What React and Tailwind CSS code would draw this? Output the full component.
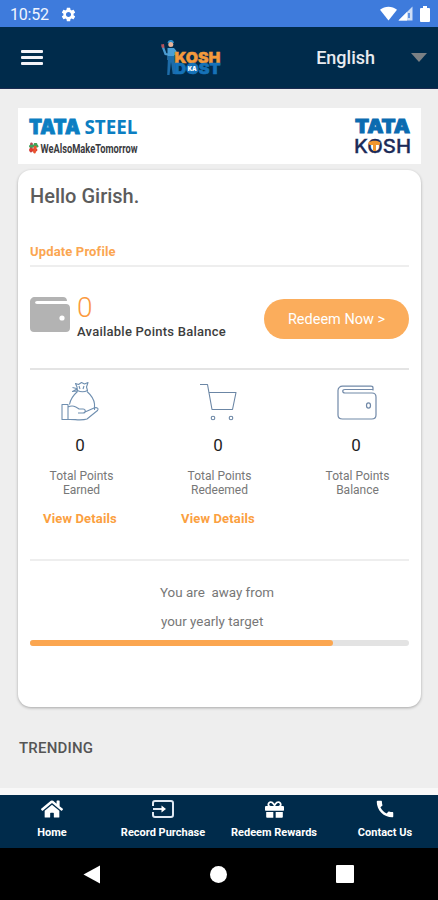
import React from "react";
import { FaHome, FaGift } from "react-icons/fa";
import { MdSettings, MdCall } from "react-icons/md";

const StatusBar = () => (
  <div className="h-[27px] shrink-0 bg-[#3e7bdc] flex items-center justify-between pl-[10px] pr-[8px] text-white">
    <div className="flex items-center gap-[11px] pt-[2px]">
      <span className="text-[16px] leading-5 tracking-[-0.2px] text-[#f0f5ff]">10:52</span>
      <MdSettings className="w-[17px] h-[17px]" />
    </div>
    <div className="flex items-center">
      <svg className="w-[17px] h-[15px]" viewBox="0 0 17 15" fill="currentColor">
        <path d="M0 3.800C5-.3 12-.3 17 3.800L8.500 14.500z" />
      </svg>
      <svg className="w-[15px] h-[15px] ml-[1px]" viewBox="0 0 15 15">
        <path d="M14.500.5v14H.5z" fill="#fff" fillOpacity="0.75" />
        <path d="M9 6v8.500H.5z" fill="#fff" />
        <path d="M11 7v5" stroke="#3e7bdc" strokeWidth="1.500" />
      </svg>
      <svg className="w-[10px] h-[16px] ml-[7px]" viewBox="0 0 10 16" fill="currentColor">
        <path d="M3 0h4v2H9a1 1 0 0 1 1 1v12a1 1 0 0 1-1 1H1a1 1 0 0 1-1-1V3a1 1 0 0 1 1-1h2z" />
      </svg>
    </div>
  </div>
);

const KoshLogo = () => (
  <svg className="w-[62px] h-[38px] overflow-visible" viewBox="0 0 62 38">
    {/* mascot */}
    <path d="M2.500 7l3 8 5 1" fill="none" stroke="#4a9bd0" strokeWidth="2.200" />
    <path d="M1 5.500l3-.5.5 3.500-2.500.5z" fill="#b5525a" />
    <path d="M8 2.500c1-2 5-2 5.500 0l.5 1.500H7.500z" fill="#2f8fc9" />
    <circle cx="10.800" cy="5.500" r="2.500" fill="#e8b49a" />
    <path d="M7.500 9h6.500l2.500 3v5l-2-1-.5 5H7.500z" fill="#4a9fd6" />
    <path d="M8 17h6.500l1.200 18h-3L11 23 9.500 36h-2.300z" fill="#1d6ca8" />
    <text x="14.500" y="23.700" fontFamily="Inter" fontWeight="900" fontSize="14.500" fill="#f39a3c" stroke="#f39a3c" strokeWidth="0.400" textLength="46" lengthAdjust="spacingAndGlyphs">KOSH</text>
    <text x="14.500" y="35" fontFamily="Inter" fontWeight="900" fontSize="14" fill="#1672b8" stroke="#1672b8" strokeWidth="0.600" textLength="46" lengthAdjust="spacingAndGlyphs">DOST</text>
    <rect x="27" y="26.800" width="10.500" height="6.400" rx="1" fill="#1672b8" />
    <text x="27.700" y="32.300" fontFamily="Inter" fontWeight="900" fontSize="6.500" fill="#fff" textLength="9" lengthAdjust="spacingAndGlyphs">KA</text>
  </svg>
);

const Header = () => (
  <header className="h-[62px] shrink-0 bg-[#002b4b] border-b border-[#1b2b50] flex items-center pl-[21px] pr-[11px]">
    <div className="flex flex-col gap-[3px] w-[22px]">
      <span className="h-[3px] rounded-[1px] bg-[#f3f3f8]" />
      <span className="h-[3px] rounded-[1px] bg-[#f3f3f8]" />
      <span className="h-[3px] rounded-[1px] bg-[#f3f3f8]" />
    </div>
    <div className="ml-[117px] pt-[1px]">
      <KoshLogo />
    </div>
    <span className="ml-auto text-[18px] leading-6 font-medium text-[#e8ebf0]">English</span>
    <svg className="ml-[36px] w-[16px] h-[9px]" viewBox="0 0 16 9">
      <path d="M0 0h16L8 9z" fill="#7b8084" />
    </svg>
  </header>
);

const Banner = () => (
  <div className="h-[56px] bg-white flex items-start justify-between pl-[10px] pr-[9px] pt-[10px]">
    <svg className="w-[112px] h-[40px] overflow-visible" viewBox="0 0 112 40">
      <text x="1" y="16" fontFamily="Inter" fontWeight="900" fontSize="20" fill="#0b7ec2" stroke="#0b7ec2" strokeWidth="0.900" textLength="51" lengthAdjust="spacingAndGlyphs">TATA</text>
      <text x="56.500" y="16" fontFamily="Open Sans" fontWeight="700" fontSize="20" fill="#0b7ec2" textLength="53" lengthAdjust="spacingAndGlyphs">STEEL</text>
      <g strokeWidth="2.800" strokeLinecap="round">
        <path d="M3.500 26l-.5 7" stroke="#b04a52" />
        <path d="M2.500 28.200h6.500" stroke="#3fa45b" />
        <path d="M2.500 32h5.500" stroke="#e03a2f" />
        <path d="M7.500 26.500l-1 7.500" stroke="#e9542f" />
        <path d="M7 26.500h1" stroke="#3fa45b" />
      </g>
      <text x="12.500" y="34.500" fontFamily="Roboto" fontWeight="700" fontSize="13" fill="#3a3a3e" textLength="97" lengthAdjust="spacingAndGlyphs">WeAlsoMakeTomorrow</text>
    </svg>
    <svg className="w-[58px] h-[38px] overflow-visible" viewBox="0 0 58 38">
      <text x="1" y="15" fontFamily="Inter" fontWeight="900" fontSize="18.500" fill="#0b6bb0" stroke="#0b6bb0" strokeWidth="0.900" textLength="55" lengthAdjust="spacingAndGlyphs">TATA</text>
      <text x="0" y="34.500" fontFamily="Inter" fontWeight="500" fontSize="18.500" fill="#1b2a58" stroke="#1b2a58" strokeWidth="0.300" textLength="57" lengthAdjust="spacingAndGlyphs">KOSH</text>
      <path d="M14.500 24.500c3-2.200 9-2.200 12 0l-1 2.500h-3.500v6h-3v-6h-3.500z" fill="#f0972f" />
    </svg>
  </div>
);

const MoneyHandIcon = () => (
  <svg className="w-[38px] h-[40px]" viewBox="0 0 38 40" fill="none" stroke="#6f8fb0" strokeWidth="1.100" strokeLinejoin="round">
    <path d="M16.500 10.500l-1-3-4-1M16 8l-4.500 2.500 4.500-.5M16 6l-1.500-3.500 3 1 3-2 3 1.500 3.500-1.500-1.500 4.500 1 3.500c-3 1.500-7 1.500-10 0zM18 5l1 3M23 5l-1 3" />
    <path d="M16.500 10.500c-4 3.500-7 7-8 13M26 10.500c4 3.500 7 8 7.500 12.500v6" />
    <path d="M1 23.500h6v15H1zM7 26c5-2.500 8 0 11 2h4c3 0 3 4 0 4h-5M24 31l9-4c3-1 5 .5 3.500 2.500L26 38c-6 2-13 0-19 .5" />
  </svg>
);

const CartIcon = () => (
  <svg className="w-[40px] h-[40px]" viewBox="0 0 40 40" fill="none" stroke="#6b86a5" strokeWidth="1.100" strokeLinejoin="round">
    <path d="M2 3.500h7.500l4.500 25h20.500l3.500-17H10.500" />
    <circle cx="15" cy="37" r="1.800" />
    <circle cx="33" cy="37" r="1.800" />
  </svg>
);

const WalletIcon = () => (
  <svg className="w-[40px] h-[40px] ml-[2px]" viewBox="0 0 40 40" fill="none" stroke="#7189a8" strokeWidth="1.200" strokeLinejoin="round">
    <path d="M36 9.500V7c0-1-.8-1.800-2-1.800H5.500C3 5.200 1 7 1 9.500V34c0 2.500 2 4 4.500 4h29.300c2.500 0 4.200-1.500 4.200-4V16c0-2.500-1.500-4-4-4H8c-3 0-3-3.500 0-3.500h28" />
    <ellipse cx="31.500" cy="24.500" rx="2" ry="2.600" />
  </svg>
);

const FilledWalletIcon = () => (
  <svg className="w-[40px] h-[35px]" viewBox="0 0 40 35">
    <path d="M5 0h28c2.500 0 4 1.500 4 4H7c-2.500 0-2.500 3 0 3h29c2.500 0 4 1.500 4 4v20c0 2.500-1.500 4-4 4H4c-2.500 0-4-1.500-4-4V5c0-3 2-5 5-5z" fill="#b3b3b3" />
    <circle cx="32" cy="21" r="2.600" fill="#fff" />
  </svg>
);

const RecordIcon = () => (
  <svg className="w-[22px] h-[18px]" viewBox="0 0 22 18" fill="none" stroke="#dfe8f2" strokeWidth="2">
    <path d="M1 6V3a2 2 0 0 1 2-2h16a2 2 0 0 1 2 2v12a2 2 0 0 1-2 2H3a2 2 0 0 1-2-2v-3M1 9h11" />
    <path d="M9.500 5.500L14 9l-4.500 3.500z" fill="#fff" stroke="none" />
  </svg>
);

const stats = [
  { label: "Earned", value: 0, icon: MoneyHandIcon, details: true },
  { label: "Redeemed", value: 0, icon: CartIcon, details: true },
  { label: "Balance", value: 0, icon: WalletIcon, details: false },
];

const navItems = [
  { label: "Home", icon: <FaHome className="w-[22px] h-[20px]" /> },
  { label: "Record Purchase", icon: <RecordIcon /> },
  { label: "Redeem Rewards", icon: <FaGift className="w-[21px] h-[19px]" /> },
  { label: "Contact Us", icon: <MdCall className="w-[22px] h-[22px]" /> },
];

const PointsCard = () => (
  <section className="mt-[6px] h-[537px] rounded-[13px] bg-white shadow-[0_1px_3px_rgba(0,0,0,0.3)] px-3">
    <div className="h-[97px] border-b-2 border-[#eeeeee] flex flex-col">
      <h1 className="pt-[14px] text-[20px] leading-6 font-medium text-[#5c5c5c]">Hello Girish.</h1>
      <a className="mt-[35px] text-[13px] leading-[18px] font-bold tracking-[0.15px] text-[#fba651]">Update Profile</a>
    </div>

    <div className="h-[103px] border-b-2 border-[#e4e4e4] flex items-start justify-between">
      <div className="flex pt-[30px]">
        <FilledWalletIcon />
        <div className="ml-[7px]">
          <div className="-mt-[5px] text-[28px] leading-[32px] font-light text-[#fb9a3e]">0</div>
          <div className="text-[13px] leading-4 font-medium tracking-[0.25px] text-[#3d3d3d]">Available Points Balance</div>
        </div>
      </div>
      <button className="mt-[32px] w-[145px] h-[40px] pt-[2px] rounded-full bg-[#fbad5c] text-white text-[14.5px]">Redeem Now &gt;</button>
    </div>

    <div className="h-[191px] border-b-2 border-[#eeeeee] flex justify-between pr-[3px] pt-[11px]">
      {stats.map((s) => (
        <div key={s.label} className="w-[100px] flex flex-col items-center text-center">
          <s.icon />
          <div className="mt-[14px] text-[17px] leading-5 text-[#1f1f1f]">{s.value}</div>
          <div className="mt-[14px] pl-[3px] text-[12px] leading-[14px] text-[#777777]">
            Total Points
            <br />
            {s.label}
          </div>
          {s.details && (
            <a className="mt-[14px] text-[13px] leading-4 font-bold tracking-[0.15px] text-[#fba041]">View Details</a>
          )}
        </div>
      ))}
    </div>

    <div className="pl-[130px] pt-[17px] text-[13.400px] leading-[29px] text-[#777777]">
      <p className="whitespace-pre">You are  away from</p>
      <p className="pl-[1px]">your yearly target</p>
    </div>
    <div className="mt-[4px] h-[6px] rounded-[3px] bg-[#e3e3e3]">
      <div className="h-full w-[80%] rounded-[3px] bg-[#fba650]" />
    </div>
  </section>
);

const BottomNav = () => (
  <nav className="h-[53px] shrink-0 bg-[#002b4b] overflow-hidden">
    <div className="grid grid-cols-4 w-[444px] -ml-[3.5px] text-white">
      {navItems.map((item) => (
        <div key={item.label} className="flex flex-col items-center pt-[3px]">
          <div className="h-[22px] flex items-center">{item.icon}</div>
          <span className="mt-[5px] text-[11px] leading-4 font-bold whitespace-nowrap">{item.label}</span>
        </div>
      ))}
    </div>
  </nav>
);

const SystemNav = () => (
  <div className="h-[52px] shrink-0 bg-black flex items-center justify-between pl-[83px] pr-[84px]">
    <svg className="w-[17px] h-[19px]" viewBox="0 0 17 19">
      <path d="M17 .5v18L.5 9.500z" fill="#fff" />
    </svg>
    <div className="w-[17px] h-[17px] rounded-full bg-white" />
    <div className="w-[18px] h-[18px] rounded-[1px] bg-white" />
  </div>
);

export default function App() {
  return (
    <div className="w-[438px] h-[900px] flex flex-col overflow-hidden bg-[#eeeeee] font-['Roboto',sans-serif]">
      <StatusBar />
      <Header />
      <main className="flex-1 min-h-0 pt-[19px] pl-[18px] pr-[17px] border-b-[7px] border-[#f8f8f8]">
        <Banner />
        <PointsCard />
        <h2 className="mt-[31px] pl-[1px] text-[15px] leading-5 font-medium tracking-[0.2px] text-[#555555]">TRENDING</h2>
      </main>
      <BottomNav />
      <SystemNav />
    </div>
  );
}
